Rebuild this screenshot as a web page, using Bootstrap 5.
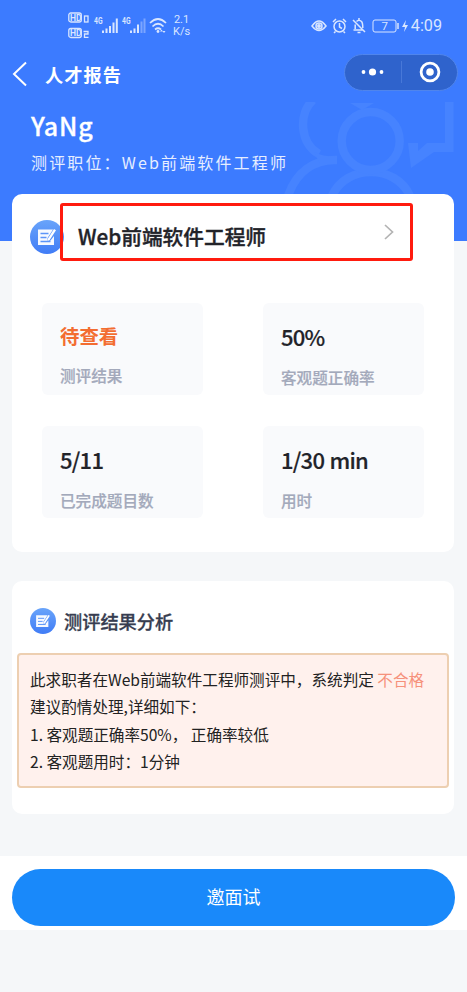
<!DOCTYPE html>
<html lang="zh-CN">
<head>
<meta charset="utf-8">
<meta name="viewport" content="width=device-width, initial-scale=1">
<title>人才报告</title>
<link href="https://cdn.jsdelivr.net/npm/bootstrap@5.3.0/dist/css/bootstrap.min.css" rel="stylesheet">
<style>
body{font-family:"Noto Sans CJK SC",sans-serif;background:#f5f7f9;color:#222329;min-height:992px;overflow-x:hidden}
.hero{height:241px;background:#3c7bff;color:#fff}
.hero-art{left:284px;top:102px}
.status-bar{height:50px;padding:2px 25px 0 68px;font-family:Roboto,sans-serif;color:#d9e6ff}
.rate{font-size:11px;line-height:12px;margin-left:6px}
.clock{font-size:16.2px;line-height:20px}
.nav-row{height:44px;padding:0 9px 0 12px}
.nav-title{font-size:18.2px;letter-spacing:1.1px;font-weight:700;line-height:28px;margin-left:18px}
.capsule{width:114px;height:37px;background:#2f63cc;border:1px solid #5085ec}
.capsule-sep{width:1px;height:22px;background:#4878d8}
.who{padding:13px 31px 0}
.who-name{font-size:25px;line-height:36px;font-weight:500;letter-spacing:.9px;-webkit-text-stroke:.3px currentColor}
.who-job{font-size:16px;line-height:24px;letter-spacing:2.15px;margin-top:7px;color:#e6eeff}
.sheet{margin:0 13px 0 12px;border-radius:10px;background:#fff}
.sheet-main{margin-top:-47px;height:358px}
.sheet-analysis{margin-top:29px;height:233px;padding:0 5px}
.job-row{padding:9px 41px 0 18px;height:67px}
.job-disc{margin-top:17px}
.job-link{width:353px;height:58px;border:3px solid #ff1b0e;border-radius:3px;margin-left:-4px;padding:0 16px 0 15px;color:#222329;position:relative}
.job-name{font-size:20.7px;line-height:30px;font-weight:500;padding-top:8px;-webkit-text-stroke:.35px currentColor}
.stats{padding:42px 30px 0;display:grid;grid-template-columns:161px 161px;justify-content:space-between;row-gap:31px}
.stat{height:92px;border-radius:6px;background:#f9fafc;padding:16px 18px 0}
.stat-value{font-size:22px;line-height:34px;font-weight:500;letter-spacing:-.75px;word-spacing:1px;-webkit-text-stroke:.2px currentColor}
.stat-value.pending{font-size:19.4px;color:#f36d31;font-weight:700;letter-spacing:0;-webkit-text-stroke:0}
.stat-label{font-size:15.6px;line-height:24px;font-weight:500;color:#a3a9bb;margin-top:12px;-webkit-text-stroke:.2px currentColor}
.pending + .stat-label{margin-top:10px}
.section-head{height:72px;padding:8px 13px 0;gap:8px}
.section-name{font-size:18.2px;line-height:28px;font-weight:500;color:#373d50;-webkit-text-stroke:.3px currentColor}
.notice{height:135px;border:2px solid #edcfb1;border-radius:4px;background:#fff1ed;padding:11px;font-size:15.6px;line-height:27.3px;color:#222}
.fail{color:#f6917b}
.action-bar{margin-top:42px;height:74px;background:#fff;padding:13px 12px 0}
.invite{height:57px;background:#1989fa;color:#fff;font-size:18px;line-height:28px;padding:0 0 3px}
.invite:hover{background:#1989fa;color:#fff}
</style>
<script src="https://cdn.jsdelivr.net/npm/bootstrap@5.3.0/dist/js/bootstrap.bundle.min.js"></script>
</head>
<body>
<header class="hero position-relative">
  <svg class="hero-art position-absolute" width="172" height="92" viewBox="0 0 172 92" fill="none" stroke="#4683ff" stroke-width="8.500">
    <path d="M48 94C62 62 112 62 126 94"/>
    <circle cx="86.700" cy="39" r="29"/>
    <path d="M29 -2C14 12 16 42 35 52" />
    <path d="M53 58C30 57 12 70 4 94" />
    <path d="M30 50Q40 55 53 54.500V62H36z" fill="#4683ff" stroke="none"/>
    <path d="M66 1H90L78 8z" fill="#4683ff" stroke="none"/>
    <path d="M161 0H169.500V50H150L127 66L124 41H134V49L143 41H161z" fill="#4683ff" stroke="none"/>
  </svg>
  <div class="status-bar d-flex align-items-center justify-content-between position-relative">
    <div class="d-flex align-items-center">
      <svg width="99" height="30" viewBox="0 0 99 30" fill="#d9e6ff" font-family="Roboto" font-weight="700">
        <g fill="none" stroke="#d9e6ff" stroke-width="1.300"><rect x=".8" y="2" width="12.500" height="9" rx="2"/><rect x=".8" y="17.500" width="12.500" height="9" rx="2"/><rect x="16.500" y="5" width="3.500" height="6"/><path d="M15.500 20.500H20V23H16.500V26.300H20.500"/></g>
        <text x="2" y="9.600" font-size="8.500">HD</text><text x="2" y="25.100" font-size="8.500">HD</text>
        <text x="26" y="13" font-size="9" textLength="8.500" lengthAdjust="spacingAndGlyphs">4G</text>
        <path d="M34 19.500h2v2.500h-2zM37.500 17.500h2v4.500h-2zM41 15h2v7h-2zM44.500 11.500h2v10.500h-2zM47.800 7.500h2v14.500h-2z"/>
        <text x="54" y="13" font-size="9" textLength="8.500" lengthAdjust="spacingAndGlyphs">4G</text>
        <path d="M62 19.500h2v2.500h-2zM65.500 17.500h2v4.500h-2zM69 13.500h2v8.500h-2z"/>
        <path d="M72.500 10.500h2v11.500h-2zM75.500 7.500h2v14.500h-2z" opacity=".4"/>
        <g fill="none" stroke="#d9e6ff" stroke-width="1.700"><path d="M82 12Q90 4 98 12M84.500 15.500Q90 10 95.500 15.500M87 18.500Q90 16 93 18.500"/></g>
        <circle cx="90" cy="20.500" r="1.400"/><path d="M92 20.500l1.500-2 1.500 2zM94.500 20l1.500 2 1.500-2z"/>
      </svg>
      <div class="rate text-center">2.1<br>K/s</div>
    </div>
    <div class="d-flex align-items-center">
      <svg width="100" height="20" viewBox="0 0 100 20" fill="none" stroke="#d9e6ff" stroke-width="1.500">
        <path d="M1 10Q8 0 15 10Q8 19 1 10Z"/><circle cx="8" cy="10" r="3"/><circle cx="8" cy="10" r="1.200" fill="#d9e6ff"/>
        <circle cx="28.500" cy="10.500" r="5.500"/><path d="M28.500 7v4l2.500 1.500M22 6l3-3M32 3l3 3M24.500 15.500l-1.500 1.500M32.500 15.500l1.500 1.500"/>
        <path d="M42 4l12 12M42.500 14H51.500M44.200 13V8.500M45.500 5.500Q48 3 50.500 5.500Q51.800 7 51.800 12M46.500 16.500h3M48 2v2.500"/>
        <rect x="62" y="4" width="23" height="12" rx="2" stroke-width="1"/><path d="M87 7v6"/>
        <text x="70.500" y="14" font-family="Roboto" font-size="11.500" fill="#d9e6ff" stroke="none">7</text>
        <path d="M95 4l-4 7h3l-1 5 4-7h-3z" fill="#d9e6ff" stroke="none"/>
      </svg>
      <span class="clock">4:09</span>
    </div>
  </div>
  <div class="nav-row d-flex align-items-center position-relative">
    <svg width="15" height="26" viewBox="0 0 15 26" fill="none" stroke="#fff" stroke-width="2" class="mt-1"><path d="M14 1.500L2 13l12 11.500"/></svg>
    <div class="nav-title mt-1">人才报告</div>
    <div class="capsule rounded-pill ms-auto d-flex align-items-center justify-content-between px-3">
      <svg width="23" height="8" viewBox="0 0 23 8" fill="#fff"><circle cx="2.500" cy="4" r="1.900"/><circle cx="11.500" cy="4" r="3.600"/><circle cx="20.500" cy="4" r="1.900"/></svg>
      <span class="capsule-sep"></span>
      <svg width="22" height="22" viewBox="0 0 22 22"><circle cx="11" cy="11" r="8.900" fill="none" stroke="#fff" stroke-width="2.800"/><circle cx="11" cy="11" r="3.800" fill="#fff"/></svg>
    </div>
  </div>
  <div class="who position-relative">
    <div class="who-name">YaNg</div>
    <div class="who-job text-nowrap">测评职位：Web前端软件工程师</div>
  </div>
</header>
<svg width="0" height="0" class="position-absolute">
  <defs>
    <linearGradient id="disc" x1="0" y1="0" x2="0" y2="1"><stop stop-color="#69a4fa"/><stop offset="1" stop-color="#407cf6"/></linearGradient>
    <symbol id="report" viewBox="0 0 34 34">
      <circle cx="17" cy="17" r="17" fill="url(#disc)"/>
      <path d="M8 9.500h15l-5.500 8.500v3.500l3-1 3.500-4.500V25H8z" fill="#fff" opacity=".95"/>
      <path d="M24 9l2 1.200-6.500 10-2 1 .3-2.500z" fill="#fff"/>
      <path d="M10.500 13.500h8M10.500 17.500h6M10.500 21.500h10" stroke="#5b94f8" stroke-width="1.300"/>
    </symbol>
  </defs>
</svg>
<main>
  <section class="sheet sheet-main position-relative">
    <div class="job-row d-flex">
      <svg width="34" height="34" class="job-disc flex-shrink-0 align-self-start"><use href="#report"/></svg>
      <a href="#" class="job-link d-flex align-items-center justify-content-between text-decoration-none flex-shrink-0">
        <span class="job-name text-nowrap">Web前端软件工程师</span>
        <svg width="10" height="16" viewBox="0 0 10 16" fill="none" stroke="#b3b3b3" stroke-width="1.700"><path d="M1 1l7.500 7L1 15"/></svg>
      </a>
    </div>
    <div class="stats">
      <div class="stat"><div class="stat-value pending">待查看</div><div class="stat-label">测评结果</div></div>
      <div class="stat"><div class="stat-value">50%</div><div class="stat-label">客观题正确率</div></div>
      <div class="stat"><div class="stat-value">5/11</div><div class="stat-label">已完成题目数</div></div>
      <div class="stat"><div class="stat-value">1/30 min</div><div class="stat-label">用时</div></div>
    </div>
  </section>
  <section class="sheet sheet-analysis">
    <div class="section-head d-flex align-items-center">
      <svg width="26" height="26"><use href="#report"/></svg>
      <div class="section-name">测评结果分析</div>
    </div>
    <div class="notice text-nowrap">
      此求职者在Web前端软件工程师测评中，系统判定 <span class="fail">不合格</span><br>
      建议酌情处理,详细如下：<br>
      1. 客观题正确率50%， 正确率较低<br>
      2. 客观题用时：1分钟
    </div>
  </section>
</main>
<footer class="action-bar">
  <button type="button" class="btn invite rounded-pill w-100 border-0">邀面试</button>
</footer>
</body>
</html>
